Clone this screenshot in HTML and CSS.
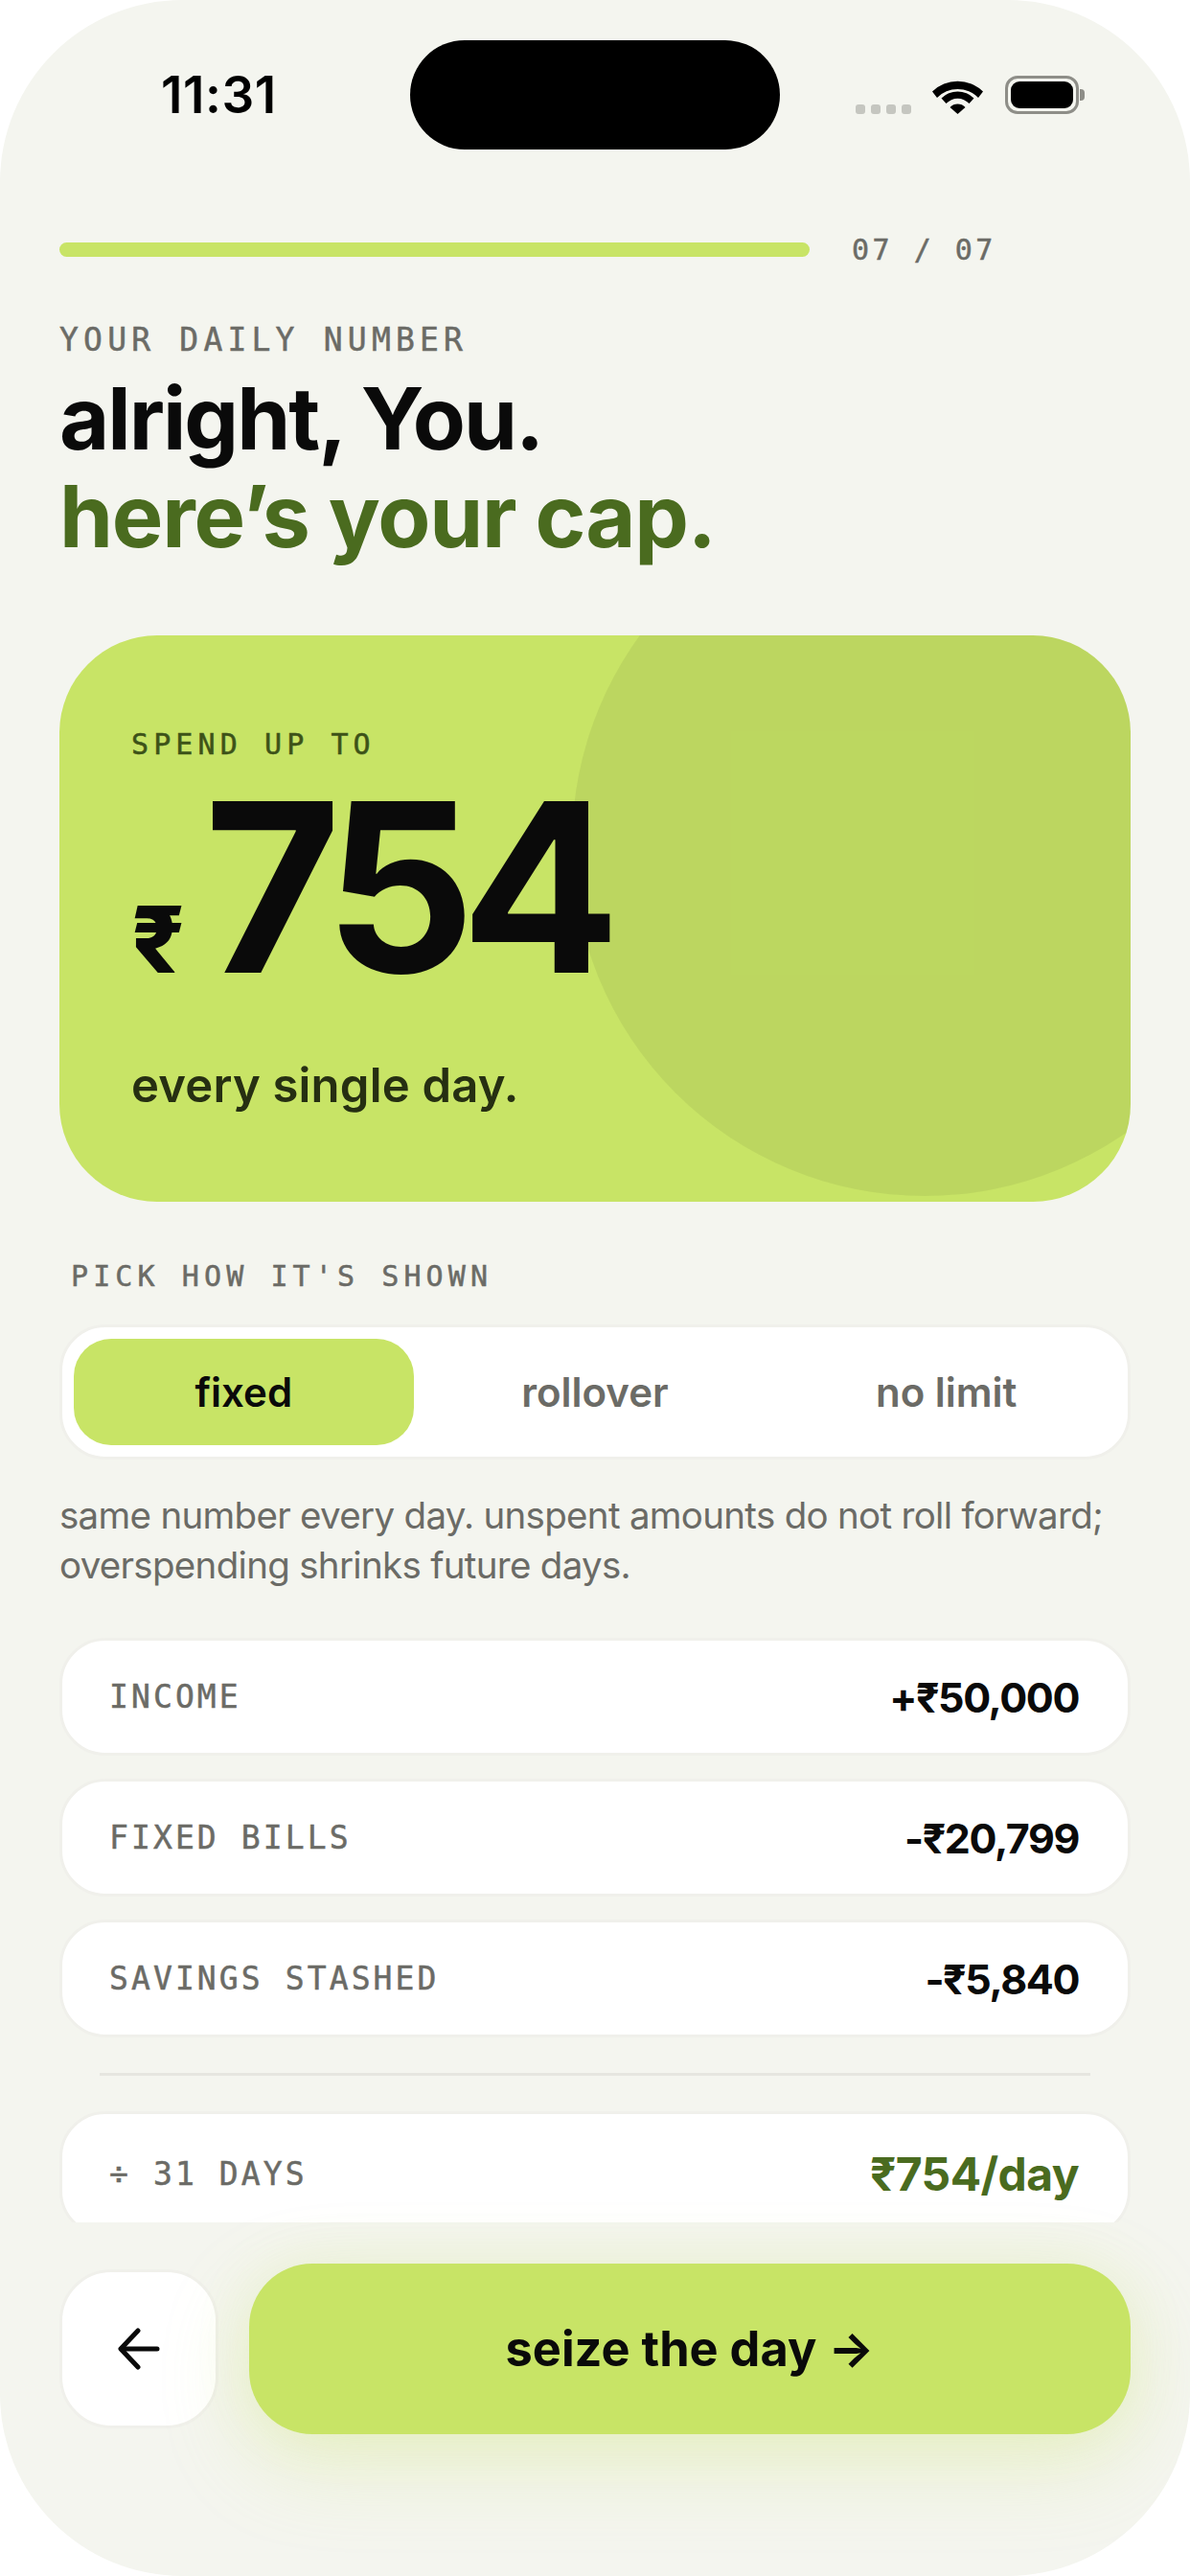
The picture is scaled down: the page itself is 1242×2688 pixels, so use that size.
FILE: index.html
```html
<!DOCTYPE html>
<html>
<head>
  <meta charset="utf-8">
  <link rel="stylesheet" href="styles.css">
</head>
<body>

  <div class="screen">

    <div class="status-bar">
      <span class="time">11:31</span>
      <div class="island"></div>
      <div class="status-icons">
        <div class="signal">
          <span></span><span></span><span></span><span></span>
        </div>
        <svg class="wifi" width="53" height="38" viewBox="0 0 53 38">
          <path d="M0 14.5 A38 38 0 0 1 53 14.5 L48 21 A30 30 0 0 0 5 21 Z" fill="#000"/>
          <path d="M9.5 24.5 A24 24 0 0 1 43.5 24.5 L38.5 30 A16.5 16.5 0 0 0 14.5 30 Z" fill="#000" transform="translate(0 -3)"/>
          <path d="M18.5 31 A11 11 0 0 1 34.5 31 L26.5 38 Z" fill="#000"/>
        </svg>
        <div class="battery"><div class="battery-fill"></div></div>
      </div>
    </div>

    <div class="progress-row">
      <div class="progress-bar"></div>
      <span class="progress-label">07 / 07</span>
    </div>

    <div class="scroll">
      <div class="eyebrow">YOUR DAILY NUMBER</div>
      <h1 class="title">alright, You.<br><span class="title-green">here’s your cap.</span></h1>

      <div class="cap-card">
        <div class="cap-circle"></div>
        <div class="cap-label">SPEND UP TO</div>
        <div class="cap-amount">
          <span class="cap-rupee">₹</span>
          <span class="cap-number">754</span>
        </div>
        <div class="cap-note">every single day.</div>
      </div>

      <div class="pick-label">PICK HOW IT'S SHOWN</div>
      <div class="tabs">
        <div class="tab tab-active">fixed</div>
        <div class="tab">rollover</div>
        <div class="tab">no limit</div>
      </div>
      <p class="desc">same number every day. unspent amounts do not roll forward; overspending shrinks future days.</p>

      <div class="row">
        <span class="row-label">INCOME</span>
        <span class="row-value">+₹50,000</span>
      </div>
      <div class="row">
        <span class="row-label">FIXED BILLS</span>
        <span class="row-value">-₹20,799</span>
      </div>
      <div class="row">
        <span class="row-label">SAVINGS STASHED</span>
        <span class="row-value">-₹5,840</span>
      </div>

      <div class="divider"></div>

      <div class="row">
        <span class="row-label">÷ 31 DAYS</span>
        <span class="row-value row-value-green">₹754/day</span>
      </div>
    </div>

    <div class="footer">
      <div class="back-button">
        <svg width="44" height="44" viewBox="0 0 44 44" fill="none" stroke="#0a0a0a" stroke-width="5" stroke-linecap="round" stroke-linejoin="round">
          <path d="M41 22 H4"/>
          <path d="M21 3 L3 22 L21 41"/>
        </svg>
      </div>
      <div class="cta">seize the day →</div>
    </div>

  </div>

</body>
</html>
```

FILE: styles.css
```css
body {
  margin: 0;
  background-color: #fff;
  font-family: Inter, "Noto Sans", sans-serif;
}
.screen {
  width: 1242px;
  height: 2688px;
  background-color: #f4f5ef;
  border-radius: 190px;
  overflow: hidden;
  display: flex;
  flex-direction: column;
}

/* status bar */
.status-bar {
  display: grid;
  grid-template-columns: 1fr 386px 1fr;
  align-items: center;
  padding-top: 42px;
  height: 114px;
  flex-shrink: 0;
}
.time {
  font-size: 53px;
  font-weight: 600;
  color: #000;
  padding-left: 168px;
  letter-spacing: 0.6px;
}
.island {
  height: 114px;
  background-color: #000;
  border-radius: 57px;
}
.status-icons {
  display: flex;
  align-items: flex-end;
  justify-content: flex-end;
  padding-right: 116px;
  height: 40px;
}
.signal {
  display: flex;
  gap: 6px;
  margin-right: 22px;
}
.signal span {
  width: 10px;
  height: 10px;
  border-radius: 3px;
  background-color: #c5c6c0;
}
.wifi {
  margin-right: 23px;
}
.battery {
  position: relative;
  width: 77px;
  height: 40px;
  box-sizing: border-box;
  border: 3px solid #8e8e88;
  border-radius: 13px;
  padding: 3px;
}
.battery::after {
  content: "";
  position: absolute;
  right: -9px;
  top: 11px;
  width: 5px;
  height: 12px;
  background-color: #8e8e88;
  border-radius: 0 4px 4px 0;
}
.battery-fill {
  height: 100%;
  background-color: #000;
  border-radius: 9px;
}

/* progress */
.progress-row {
  display: flex;
  align-items: center;
  gap: 44px;
  padding: 0 62px;
  margin-top: 89px;
  height: 30px;
  flex-shrink: 0;
}
.progress-bar {
  width: 783px;
  height: 15px;
  background-color: #c8e466;
  border-radius: 8px;
}
.progress-label {
  font-family: "DejaVu Sans Mono", monospace;
  font-size: 30px;
  letter-spacing: 3.5px;
  -webkit-text-stroke: 0.5px #6b6b66;
  color: #6b6b66;
}

/* content */
.scroll {
  height: 2044px;
  overflow: hidden;
  padding: 0 62px;
  flex-shrink: 0;
}
.eyebrow {
  font-family: "DejaVu Sans Mono", monospace;
  font-size: 33px;
  letter-spacing: 5.2px;
  line-height: 40px;
  -webkit-text-stroke: 0.5px #6b6b66;
  color: #6b6b66;
  margin-top: 60px;
}
.title {
  font-size: 90px;
  font-weight: 700;
  line-height: 102px;
  letter-spacing: -2px;
  color: #0a0a0a;
  margin: 11px 0 0;
}
.title-green {
  letter-spacing: -1.2px;
  color: #4a6b1f;
}

/* big number card */
.cap-card {
  position: relative;
  height: 591px;
  box-sizing: border-box;
  margin-top: 73px;
  padding: 96px 75px 0;
  background-color: #c8e466;
  border-radius: 102px;
  overflow: hidden;
}
.cap-circle {
  position: absolute;
  top: -151px;
  right: -153px;
  width: 736px;
  height: 736px;
  border-radius: 50%;
  background-color: rgba(0, 0, 0, 0.06);
}
.cap-label {
  position: relative;
  font-family: "DejaVu Sans Mono", monospace;
  font-size: 30px;
  letter-spacing: 5.1px;
  line-height: 36px;
  -webkit-text-stroke: 0.5px #3d5218;
  color: #3d5218;
}
.cap-amount {
  position: relative;
  display: flex;
  align-items: baseline;
  gap: 20px;
  height: 240px;
  margin-top: 11px;
  line-height: 240px;
  color: #0a0a0a;
}
.cap-rupee {
  font-size: 96px;
  font-weight: 800;
}
.cap-number {
  font-size: 246px;
  font-weight: 700;
  letter-spacing: -15px;
}
.cap-note {
  position: relative;
  font-size: 49px;
  font-weight: 600;
  letter-spacing: 0.2px;
  color: #262f12;
  margin-top: 57px;
}

/* display picker */
.pick-label {
  font-family: "DejaVu Sans Mono", monospace;
  font-size: 30px;
  letter-spacing: 5.1px;
  line-height: 36px;
  -webkit-text-stroke: 0.5px #6b6b66;
  color: #6b6b66;
  margin: 60px 0 0 12px;
}
.tabs {
  display: flex;
  gap: 12px;
  padding: 12px;
  margin-top: 32px;
  background-color: #fff;
  border: 3px solid #f0f0eb;
  border-radius: 48px;
}
.tab {
  flex: 1;
  height: 111px;
  line-height: 111px;
  text-align: center;
  font-size: 42px;
  font-weight: 600;
  color: #6b6b66;
  border-radius: 39px;
}
.tab-active {
  background-color: #c8e466;
  color: #0a0a0a;
}
.desc {
  font-size: 38.5px;
  line-height: 52px;
  letter-spacing: -0.7px;
  color: #6b6b66;
  margin: 32px 0 0;
}

/* summary rows */
.row {
  display: flex;
  align-items: center;
  justify-content: space-between;
  height: 123px;
  box-sizing: border-box;
  padding: 0 51px 0 49px;
  margin-top: 24px;
  background-color: #fff;
  border: 3px solid #f0f0eb;
  border-radius: 48px;
}
.desc + .row {
  margin-top: 50px;
}
.row-label {
  font-family: "DejaVu Sans Mono", monospace;
  font-size: 33px;
  letter-spacing: 3.1px;
  -webkit-text-stroke: 0.5px #6b6b66;
  color: #6b6b66;
}
.row-value {
  font-size: 43px;
  font-weight: 700;
  letter-spacing: -1.4px;
  color: #0a0a0a;
}
.row-value-green {
  font-size: 48px;
  letter-spacing: -0.6px;
  color: #4a6b1f;
}
.divider {
  height: 3px;
  margin: 37px 42px;
  background-color: #e6e6e0;
}
.divider + .row {
  margin-top: 0;
  height: 131px;
}

/* bottom actions */
.footer {
  display: flex;
  align-items: center;
  gap: 32px;
  padding: 43px 62px 0;
}
.back-button {
  width: 166px;
  height: 166px;
  box-sizing: border-box;
  display: flex;
  align-items: center;
  justify-content: center;
  flex-shrink: 0;
  background-color: #fff;
  border: 3px solid #f0f0eb;
  border-radius: 54px;
}
.cta {
  flex: 1;
  height: 178px;
  line-height: 178px;
  text-align: center;
  font-size: 50.5px;
  font-weight: 700;
  color: #0a0a0a;
  background-color: #c8e466;
  border-radius: 66px;
  box-shadow: 0 30px 90px rgba(200, 228, 102, 0.28), 0 0 60px rgba(200, 228, 102, 0.12);
}
```
